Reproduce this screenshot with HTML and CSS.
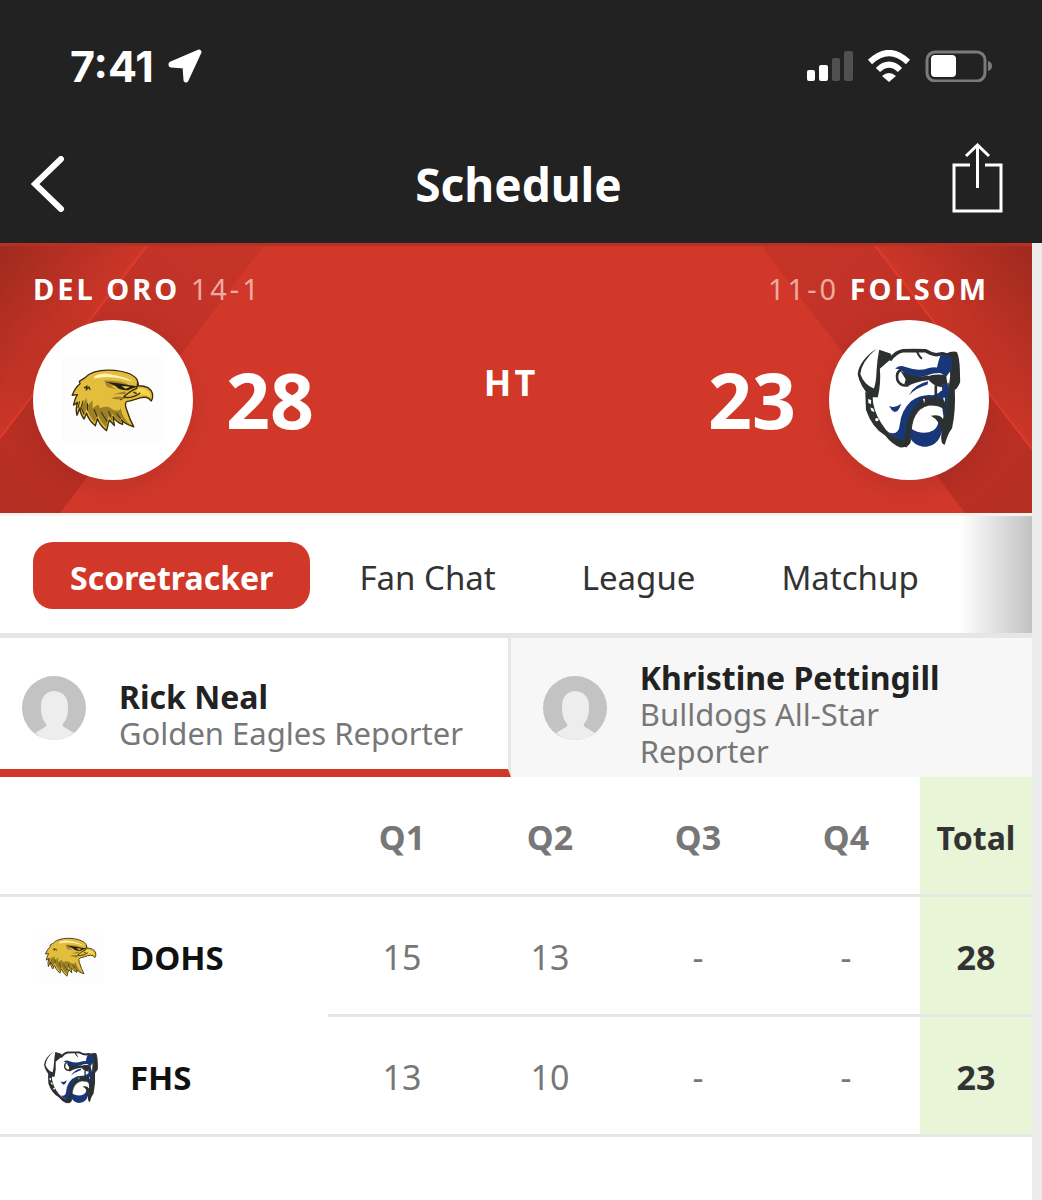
FILE: index.html
```html
<!doctype html>
<html lang="en">
<head>
    <meta charset="UTF-8" />
    <meta name="viewport" content="width=device-width, initial-scale=1.0" />
    <title>Schedule - Del Oro vs Folsom</title>
    <link rel="stylesheet" href="styles.css">
</head>
<body>
    <!-- Team logos, used in the scoreboard and in the table -->
    <svg class="sprites" aria-hidden="true">
        <symbol id="eagle" viewBox="15 0 300 270">
            <path fill="#fdfdfd" d="M15 6h300v258H15z"/>
            <path fill="#e3bd3c" stroke="#3b2c0c" stroke-width="4" stroke-linejoin="round" d="M82 70 C98 52 132 45 170 48 C204 52 229 63 236 76 L240 93 C257 93 276 99 281 116 Q283 131 277 138 Q270 126 255 127 C238 128 222 139 207 139 Q198 142 204 160 Q213 190 226 214 Q203 207 190 194 Q195 205 193 207 Q175 200 165 184 L169 210 L154 194 L146 225 Q127 210 119 190 L113 211 Q94 195 87 174 L80 191 Q68 175 68 158 L59 180 Q54 162 61 142 L49 150 Q52 132 60 119 L45 121 Q53 99 68 87 L66 80 Z"/>
            <path fill="#9b8028" d="M74 150 L87 129 L91 151 L105 136 L105 159 L121 148 L127 159 Q152 150 160 161 Q181 173 188 160 Q192 189 218 209 Q202 204 187 186 L188 201 Q176 195 163 175 L163 199 L152 183 L145 215 Q129 202 120 178 L111 200 Q97 185 88 160 L79 180 Q72 169 74 150Z"/>
            <path fill="none" stroke="#3b2c0c" stroke-width="3" d="M67 139 L62 159M77 137 L71 158 L80 177M90 145 L90 166M109 162 L119 185M130 170 L148 199M152 168 L158 184M175 174 L188 190"/>
            <path fill="#fff3ba" d="M110 65 Q132 53 160 60 Q199 66 224 81 L189 72 Q150 63 110 72Z"/>
            <path fill="#a7882d" d="M139 78 Q185 76 211 90 L159 94 L175 104 L147 97Z"/>
            <path fill="#26200f" d="M143 81 Q181 85 211 91 L240 95 Q218 101 210 106 Q184 107 174 95 Q165 88 143 81Z"/>
            <path fill="#f4d94d" d="M190 94 L216 96 L202 102Z"/>
            <path fill="#f2d650" d="M234 101 Q263 99 273 116 L275 126 Q257 114 235 121Z"/>
            <path fill="none" stroke="#3b2c0c" stroke-width="4" d="M238 80 L235 101 Q215 107 187 135 Q195 124 208 128 Q231 127 245 114M225 112 L235 116M80 100 L88 95 L87 104 L94 97 L98 105"/>
            <path fill="#997e2d" d="M159 130 Q181 122 202 129 Q184 137 159 130M204 119 Q184 116 165 119 L200 109Z"/>
        </symbol>
        <symbol id="bulldog" viewBox="30 30 320 310">
            <!-- head -->
            <path fill="#fff" d="M100 60 Q170 35 240 45 L310 60 L325 150 Q325 260 298 310 L230 325 L170 325 Q100 290 65 190 L38 115 L90 40Z"/>
            <path fill="none" stroke="#2d3030" stroke-width="11" stroke-linejoin="round" d="M132 72 Q152 46 172 44 Q205 43 240 44 Q256 54 272 56 L290 53 L312 58"/>
            <path fill="none" stroke="#2d3030" stroke-width="6" d="M214 46 Q220 62 229 68"/>
            <!-- ears -->
            <path fill="#2d3030" d="M92 37 Q38 75 35 115 Q42 152 74 184 L96 184 Q106 140 102 98 Q118 84 140 66 L134 52 L100 41 Q94 70 92 105 Q91 140 84 158 Q54 146 43 114 Q46 78 92 37Z"/>
            <path fill="#2d3030" stroke="#2d3030" stroke-width="5" stroke-linejoin="round" d="M300 56 Q322 46 333 50 Q340 65 341 100 L342 138 Q334 158 325 161 L314 142 Q322 100 308 66Z"/>
            <path fill="#183779" d="M284 60 Q304 50 318 66 Q324 88 316 104 L302 122 Q288 112 272 104 Q278 78 284 60Z"/>
            <!-- brow and eye -->
            <path fill="#183779" d="M148 98 Q160 84 182 94 Q218 108 250 96 Q270 90 290 98 L300 112 Q270 108 245 118 Q210 132 180 116 Q166 98 148 98Z"/>
            <path fill="none" stroke="#2d3030" stroke-width="8" d="M166 102 Q150 108 155 132 Q164 152 188 148"/>
            <path fill="#2d3030" d="M164 104 L184 114 Q214 128 248 118 L250 132 Q208 138 188 150 L176 144 L180 130Z"/>
            <!-- collar and jaw -->
            <path fill="#2d3030" d="M58 168 L80 180 Q80 222 106 262 Q132 306 170 312 Q186 306 190 290 L194 322 Q184 336 164 336 Q140 328 118 300 Q78 276 60 222Z"/>
            <g fill="#fff"><path d="M67 189l9 4 -1 12 -8-4z"/><path d="M73 215l9 3 4 11 -9-3z"/><circle cx="93" cy="252" r="5"/></g>
            <!-- cheek -->
            <path fill="#183779" d="M130 210 Q146 220 166 204 Q160 228 146 229 Q136 224 130 210M190 178 Q204 146 248 136 L246 146 Q212 156 190 178Z"/>
            <path fill="#183779" d="M300 130 Q314 150 312 190 Q308 230 296 256 L288 200 L262 196 Q226 200 206 228 Q192 256 192 300 L170 314 Q144 308 128 290 Q158 302 162 268 Q166 224 196 196 Q226 174 262 178 Q292 172 290 148Z"/>
            <path fill="#2d3030" stroke="#2d3030" stroke-width="3" d="M228 184 Q256 190 290 190 L300 184 L300 222 Q282 206 250 208 Q222 214 208 240 Q196 262 196 300 Q196 324 182 334 L164 330 Q182 312 183 276 Q188 226 226 198Z"/>
            <!-- muzzle -->
            <path fill="#2d3030" d="M242 122 Q270 112 302 118 L306 146 L294 142 L288 154 Q262 152 242 122Z"/>
            <path fill="none" stroke="#2d3030" stroke-width="8" d="M271 148 L271 192"/>
            <path fill="#fff" d="M278 158 L290 156 L290 164 L278 168ZM232 188l6 2 -2 12zM293 186l6 0 -2 14z"/>
            <path fill="#2d3030" d="M308 140 L328 158 Q332 222 320 278 Q306 296 298 328 Q284 328 288 290 Q286 262 296 240 Q314 200 308 140Z"/>
            <!-- chin -->
            <path fill="#183779" d="M194 278 Q232 302 264 284 Q282 270 278 246 Q294 262 288 292 Q276 334 232 334 Q204 328 194 308Z"/>
            <path fill="#2d3030" d="M256 240 Q284 234 294 252 L288 292 Q286 256 256 240Z"/>
        </symbol>
        <symbol id="person" viewBox="0 0 64 64">
            <circle cx="32" cy="32" r="32" fill="#c3c3c3"/>
            <path fill="#ededed" d="M13 57 L23 51 Q26 49 22 45 Q19 41 19 29 Q20 16 32 15 Q45 16 46 29 Q46 41 43 45 Q39 49 42 51 L52 57 Q43 64 32 64 Q21 64 13 57Z"/>
        </symbol>
    </svg>

    <header class="app-header">
        <div class="status-bar">
            <div class="clock">
                <span>7:41</span>
                <svg width="34" height="34" viewBox="0 0 34 34"><path fill="#fff" stroke="#fff" stroke-width="5" stroke-linejoin="round" d="M3 15 L31 3 L18 31 L17 17 L3 16Z"/></svg>
            </div>
            <div class="indicators">
                <svg width="46" height="31" viewBox="0 0 46 31">
                    <g fill="#fff"><rect y="19" width="8" height="11" rx="2"/><rect x="12" y="14" width="9" height="16" rx="2"/></g>
                    <g fill="#505050"><rect x="25" y="7" width="8" height="23" rx="2"/><rect x="37" width="9" height="30" rx="2"/></g>
                </svg>
                <svg width="44" height="33" viewBox="0 0 44 33">
                    <g fill="none" stroke="#fff" stroke-width="6"><path d="M3 12 Q22 -6 41 12"/><path d="M11 20 Q22 9 33 20"/></g>
                    <path fill="#fff" d="M15 26 Q22 20 29 26 L22 32Z"/>
                </svg>
                <svg width="68" height="32" viewBox="0 0 68 32">
                    <rect x="2" y="2" width="58" height="29" rx="8" fill="none" stroke="#7b7b7b" stroke-width="3"/>
                    <rect x="6" y="5" width="25" height="22" rx="4" fill="#fff"/>
                    <path fill="#7b7b7b" d="M63 11 Q67 12 67 16 Q67 20 63 21Z"/>
                </svg>
            </div>
        </div>
        <div class="title-bar">
            <button class="back-btn" aria-label="Back">
                <svg width="34" height="56" viewBox="0 0 34 56"><path fill="none" stroke="#fff" stroke-width="6" stroke-linecap="round" d="M30 3 L4 28 L30 53"/></svg>
            </button>
            <h1>Schedule</h1>
            <button aria-label="Share">
                <svg width="52" height="82" viewBox="0 0 52 82"><path fill="none" stroke="#fff" stroke-width="3" d="M18 22H2v46h47V22H33M25.500 45V3M14 13 L25.500 2 L37 13"/></svg>
            </button>
        </div>
    </header>

    <main class="page">
        <section class="scoreboard">
            <svg class="backdrop" viewBox="0 0 1032 270" preserveAspectRatio="none" aria-hidden="true">
                <defs>
                    <linearGradient id="corner" x1="0" y1="0" x2="1" y2="1">
                        <stop offset="0" stop-color="#9f291e"/>
                        <stop offset=".5" stop-color="#cb3628"/>
                    </linearGradient>
                    <linearGradient id="band" x1="1" y1="0" x2="0" y2="1">
                        <stop offset="0" stop-color="#c63427"/>
                        <stop offset=".5" stop-color="#bf3126"/>
                        <stop offset="1" stop-color="#b62e23"/>
                    </linearGradient>
                </defs>
                <g>
                    <path fill="url(#band)" d="M149 0H266L60 270H0V195Z"/>
                    <path fill="url(#corner)" d="M0 0H149L0 195Z"/>
                    <path stroke="#df3b2b" stroke-width="2" d="M149 0L0 195"/>
                </g>
                <g transform="translate(1032 0) scale(-1 1)">
                    <path fill="url(#band)" d="M159 0H273L67 270H0V206Z"/>
                    <path fill="url(#corner)" d="M0 0H159L0 206Z"/>
                    <path stroke="#df3b2b" stroke-width="2" d="M159 0L0 206"/>
                </g>
                <path fill="#b53025" d="M0 0h1032v3H0z"/>
            </svg>
            <div class="teams">
                <div><strong>DEL ORO</strong> <span class="record">14-1</span></div>
                <div><span class="record">11-0</span> <strong>FOLSOM</strong></div>
            </div>
            <div class="scores">
                <div class="side">
                    <div class="badge"><svg width="102" height="92" role="img" aria-label="Del Oro logo"><use href="#eagle"/></svg></div>
                    <span class="points">28</span>
                </div>
                <span class="period">HT</span>
                <div class="side">
                    <span class="points">23</span>
                    <div class="badge"><svg class="dog" width="106" height="103" role="img" aria-label="Folsom logo"><use href="#bulldog"/></svg></div>
                </div>
            </div>
        </section>

        <nav class="tabs">
            <a href="#scoretracker" class="tab active">Scoretracker</a>
            <a href="#fan-chat" class="tab">Fan Chat</a>
            <a href="#league" class="tab">League</a>
            <a href="#matchup" class="tab">Matchup</a>
        </nav>

        <div class="reporters">
            <button class="reporter selected">
                <svg class="avatar" width="64" height="64"><use href="#person"/></svg>
                <span class="reporter-text"><strong>Rick Neal</strong><span>Golden Eagles Reporter</span></span>
            </button>
            <button class="reporter">
                <svg class="avatar" width="64" height="64"><use href="#person"/></svg>
                <span class="reporter-text"><strong>Khristine Pettingill</strong><span>Bulldogs All-Star Reporter</span></span>
            </button>
        </div>

        <table class="box-score">
            <thead>
                <tr>
                    <th class="team-col" aria-label="Team"></th>
                    <th scope="col">Q1</th>
                    <th scope="col">Q2</th>
                    <th scope="col">Q3</th>
                    <th scope="col">Q4</th>
                    <th scope="col" class="total">Total</th>
                </tr>
            </thead>
            <tbody>
                <tr>
                    <th scope="row"><span class="team"><svg width="64" height="58"><use href="#eagle"/></svg>DOHS</span></th>
                    <td>15</td>
                    <td>13</td>
                    <td>-</td>
                    <td>-</td>
                    <td class="total">28</td>
                </tr>
                <tr>
                    <th scope="row"><span class="team"><svg width="64" height="54"><use href="#bulldog"/></svg>FHS</span></th>
                    <td>13</td>
                    <td>10</td>
                    <td>-</td>
                    <td>-</td>
                    <td class="total">23</td>
                </tr>
            </tbody>
        </table>
    </main>
</body>
</html>
```
FILE: styles.css
```css
* {
    margin: 0;
    padding: 0;
    box-sizing: border-box;
}

body {
    font-family: "Noto Sans", sans-serif;
    font-size: 34px;
    color: #333;
    background: #ececec;
    min-height: 100vh;
    display: flex;
    flex-direction: column;
}

svg {
    display: block;
    flex-shrink: 0;
}

button {
    font: inherit;
    color: inherit;
    background: none;
    border: none;
    cursor: pointer;
}

.sprites {
    position: absolute;
    width: 0;
    height: 0;
}

/* Header */
.app-header {
    background: #222;
    color: white;
}

.status-bar {
    display: flex;
    align-items: center;
    justify-content: space-between;
    height: 132px;
    padding: 0 49px 0 70px;
}

.clock {
    display: flex;
    align-items: center;
    gap: 14px;
    font-family: Inter, sans-serif;
    font-size: 43px;
    font-weight: 700;
}

.indicators {
    display: flex;
    align-items: center;
    gap: 14px;
}

.title-bar {
    display: flex;
    align-items: center;
    justify-content: space-between;
    height: 111px;
    padding: 0 38px 8px 31px;
}

.back-btn {
    width: 54px;
}

.title-bar h1 {
    font-size: 46px;
    font-weight: 700;
}

.page {
    flex: 1;
    margin-right: 10px;
    background: white;
}

/* Scoreboard */
.scoreboard {
    position: relative;
    padding: 26px 43px 33px 33px;
    background: #d2382a;
    color: white;
}

.backdrop {
    position: absolute;
    inset: 0;
    width: 100%;
    height: 100%;
}

.teams,
.scores {
    position: relative;
    display: flex;
    justify-content: space-between;
}

.teams {
    margin-bottom: 11px;
    font-size: 29px;
    line-height: 40px;
    letter-spacing: 3px;
}

.record {
    color: #f0aaa1;
}

.scores {
    align-items: center;
}

.side {
    display: flex;
    align-items: center;
    gap: 33px;
}

.badge {
    display: flex;
    align-items: center;
    justify-content: center;
    width: 160px;
    height: 160px;
    border-radius: 50%;
    background: white;
    box-shadow: 0 8px 30px rgba(0, 0, 0, 0.1);
}

.dog {
    margin-bottom: 6px;
}

.points {
    font-size: 77px;
    font-weight: 700;
    line-height: 80px;
}

.period {
    padding-bottom: 36px;
    font-size: 36px;
    font-weight: 700;
    letter-spacing: 3px;
}

/* Tabs */
.tabs {
    display: flex;
    align-items: center;
    gap: 12px;
    padding: 26px 33px 24px;
    border-top: 3px solid #f5f3ee;
    border-bottom: 5px solid #e6e6e6;
    background: linear-gradient(to right, rgba(0, 0, 0, 0) 93%, rgba(0, 0, 0, 0.24)) white;
}

.tab {
    padding: 5px 37px 0;
    font-size: 33px;
    line-height: 62px;
    border-radius: 20px;
    color: #333;
    text-decoration: none;
    white-space: nowrap;
}

.tab.active {
    background: #d2382a;
    color: white;
    font-size: 32px;
    font-weight: 700;
}

/* Reporters */
.reporters {
    display: flex;
}

.reporter {
    display: flex;
    align-items: center;
    flex: 1;
    gap: 33px;
    padding: 7px 22px 7px 32px;
    background: #f7f7f7;
    text-align: left;
}

.reporter.selected {
    flex: 0 0 49.5%;
    padding: 8px 0 0 22px;
    background: white;
    border-right: 3px solid #e6e6e6;
    border-bottom: 8px solid #d2382a;
}

.reporter-text {
    padding-top: 14px;
    line-height: 37px;
}

.reporter-text strong,
.reporter-text span {
    display: block;
}

.reporter-text strong {
    font-size: 32px;
    color: #222;
}

.reporter-text span {
    font-size: 31px;
    color: #777;
}

/* Box score */
.box-score {
    width: 100%;
    table-layout: fixed;
    border-collapse: separate;
    border-spacing: 0;
}

.box-score th,
.box-score td {
    height: 120px;
    padding-top: 3px;
    border-bottom: 3px solid #e6e6e6;
    text-align: center;
    color: #777;
}

.box-score .team-col {
    width: 328px;
}

.box-score .total {
    width: 112px;
    background: #e8f5d6;
    background-clip: padding-box;
    color: #333;
    font-weight: 700;
}

.box-score th.total {
    font-size: 32px;
}

.box-score tbody th {
    font-size: 33px;
    color: #111;
}

.box-score tbody tr:first-child th {
    border-bottom-color: transparent;
}

.team {
    display: flex;
    align-items: center;
    gap: 27px;
    padding-left: 39px;
}
```
